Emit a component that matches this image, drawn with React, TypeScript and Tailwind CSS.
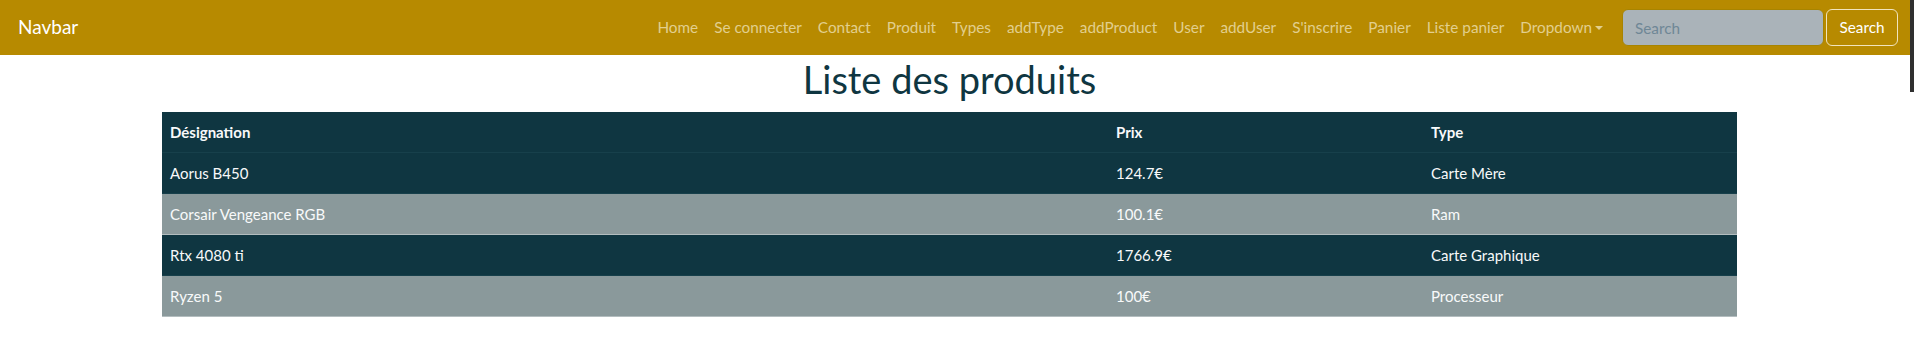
const links = [
  "Home",
  "Se connecter",
  "Contact",
  "Produit",
  "Types",
  "addType",
  "addProduct",
  "User",
  "addUser",
  "S'inscrire",
  "Panier",
  "Liste panier",
];

const produits = [
  { nom: "Aorus B450", prix: "124.7€", type: "Carte Mère" },
  { nom: "Corsair Vengeance RGB", prix: "100.1€", type: "Ram" },
  { nom: "Rtx 4080 ti", prix: "1766.9€", type: "Carte Graphique" },
  { nom: "Ryzen 5", prix: "100€", type: "Processeur" },
];

export default function App() {
  return (
    <div className="flex h-[340px] w-[1914px] bg-white font-['Lato',sans-serif]">
      <div className="flex-1">
        {/* Navbar */}
        <nav className="flex h-[55px] items-center bg-[#b78a00] pl-[18px] pr-[12px]">
          <span className="text-[19px] text-white">Navbar</span>
          <ul className="ml-auto flex items-center text-[15.3px] text-[#e2cf8e]">
            {links.map((l) => (
              <li key={l} className="px-[8px]">
                {l}
              </li>
            ))}
            <li className="flex items-center gap-[3px] px-[8px]">
              Dropdown
              <span className="mt-[1px] h-0 w-0 border-x-[4px] border-t-[4px] border-x-transparent border-t-[#e2cf8e]" />
            </li>
          </ul>
          <form className="ml-[11px] flex gap-[2px]">
            <input
              placeholder="Search"
              className="h-[37px] w-[202px] rounded-[6px] border border-[#a88400] bg-[#aab3b9] px-[12px] text-[15.3px] placeholder:text-[#6f8796] outline-none"
            />
            <button
              type="button"
              className="h-[37px] w-[72px] rounded-[6px] border border-[#f1e4bd] text-[15.3px] text-white"
            >
              Search
            </button>
          </form>
        </nav>

        {/* Contenu */}
        <div className="ml-[162px] w-[1575px]">
          <h1 className="mb-[9px] h-[48px] text-center text-[38px] leading-[48px] text-[#0f3641]">
            Liste des produits
          </h1>
          <div className="text-[15px] text-[#f8f9fa]">
            <div className="grid h-[41px] grid-cols-[946px_315px_1fr] items-center border-b border-[#17404b] bg-[#0f3641] font-bold">
              <div className="px-[8px]">Désignation</div>
              <div className="px-[8px]">Prix</div>
              <div className="px-[8px]">Type</div>
            </div>
            {produits.map((p, i) => (
              <div
                key={p.nom}
                className={
                  i % 2 === 0
                    ? "grid h-[41px] grid-cols-[946px_315px_1fr] items-center border-b border-[#17404b] bg-[#0f3641]"
                    : "grid h-[41px] grid-cols-[946px_315px_1fr] items-center border-b border-[#b3bdbf] bg-[#8a999b]"
                }
              >
                <div className="px-[8px]">{p.nom}</div>
                <div className="px-[8px]">{p.prix}</div>
                <div className="px-[8px]">{p.type}</div>
              </div>
            ))}
          </div>
        </div>
      </div>
      {/* barre de défilement */}
      <div className="flex w-[4px] flex-col">
        <div className="h-[92px] bg-[#2f2f2f]" />
      </div>
    </div>
  );
}
